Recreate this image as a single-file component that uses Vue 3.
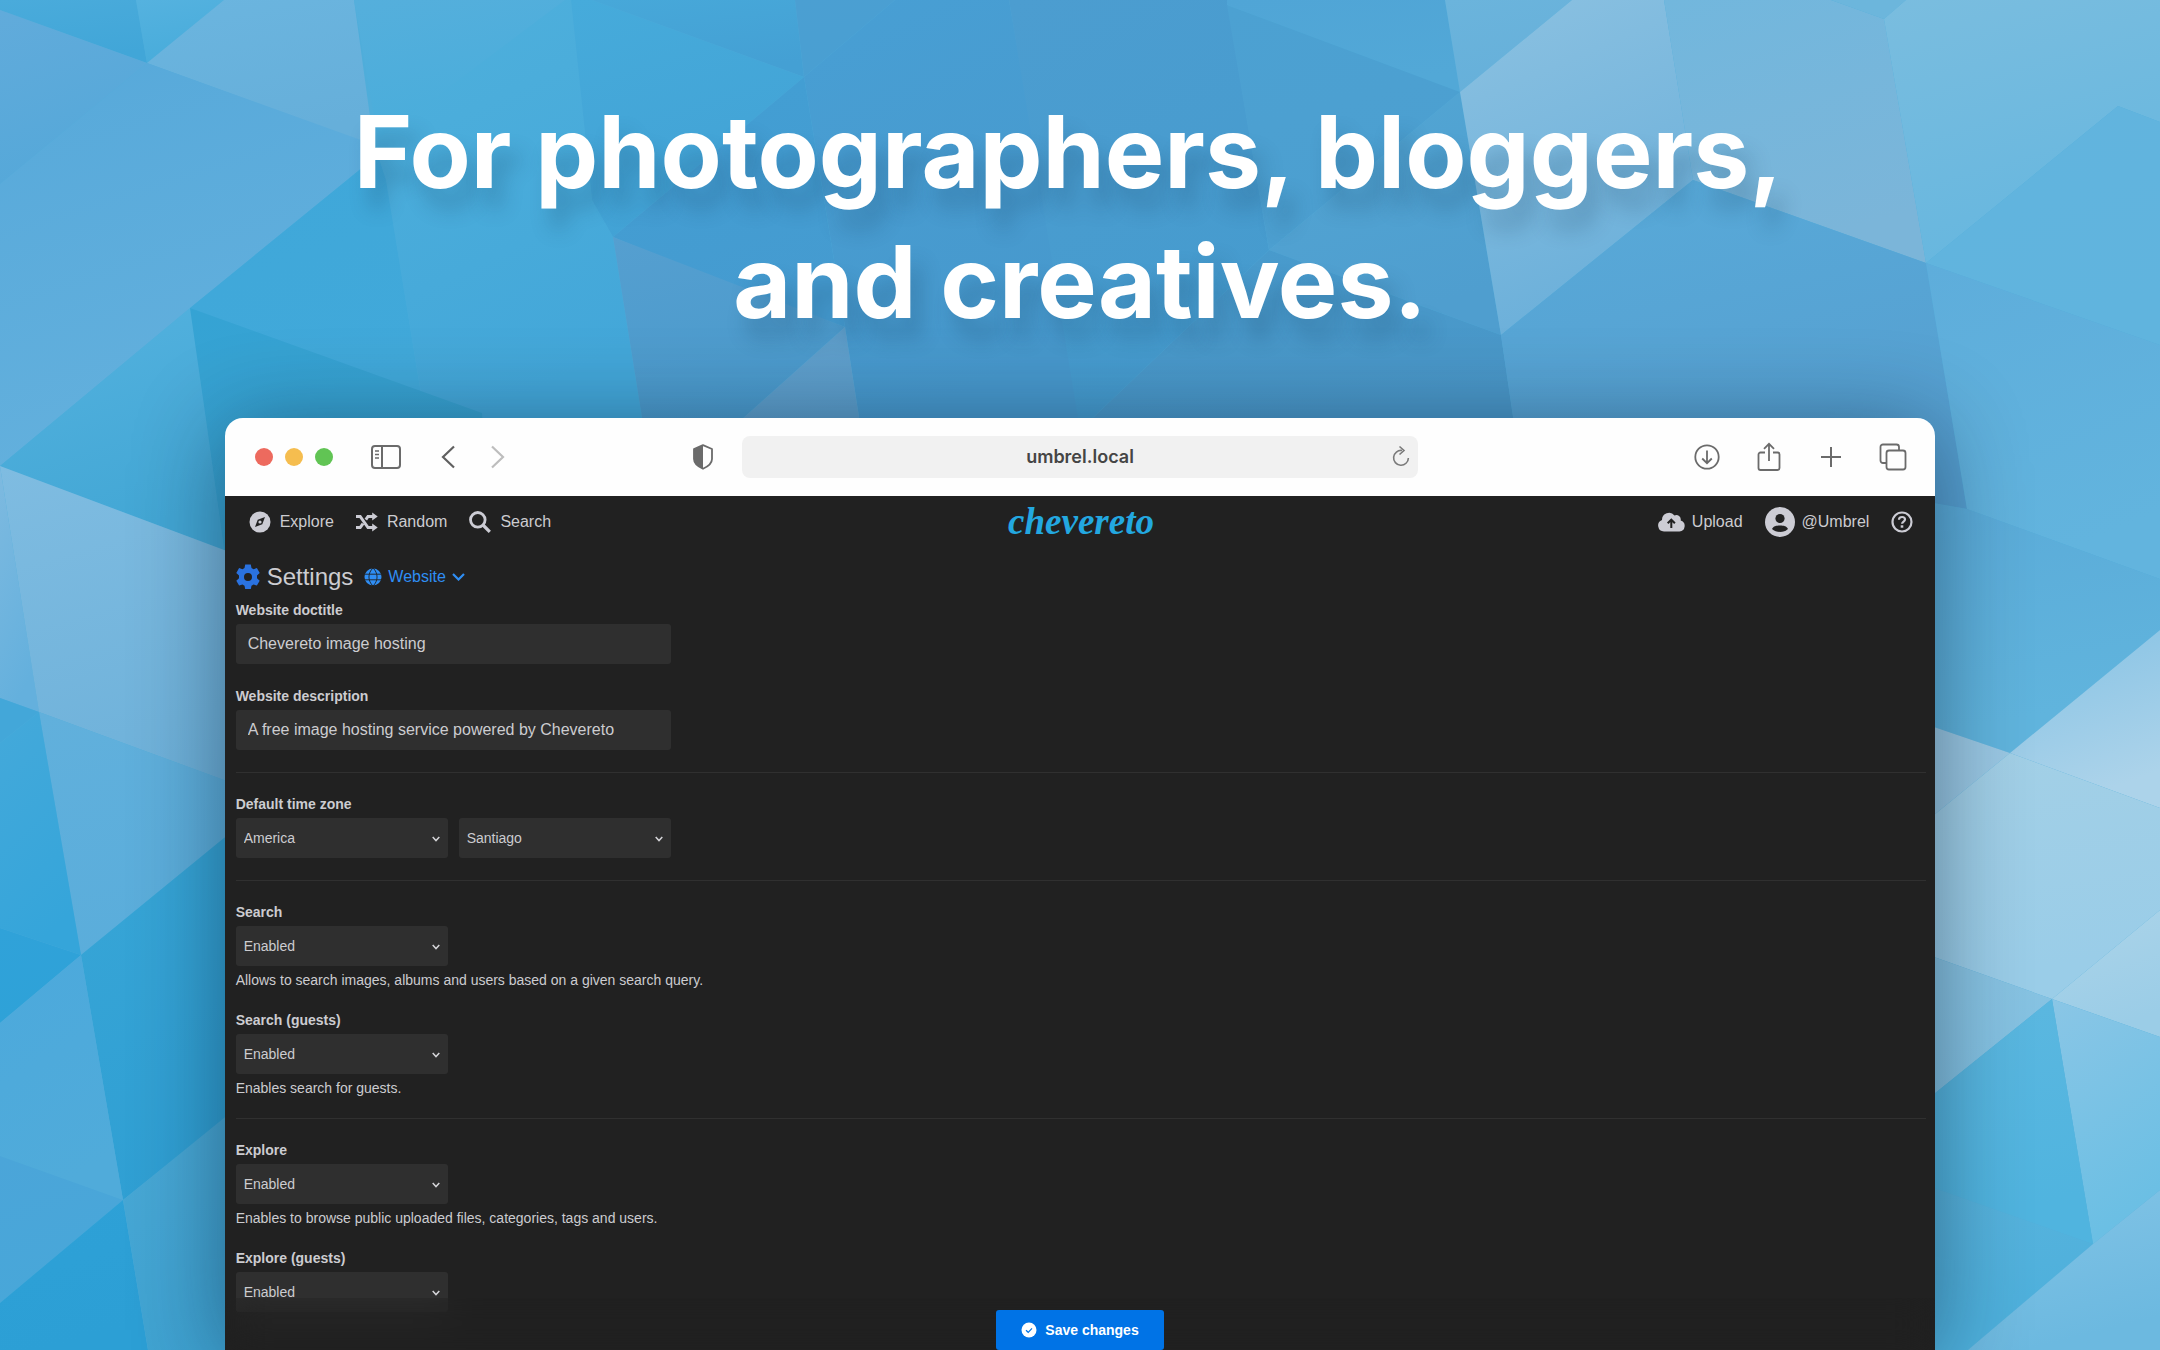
<script setup>
import { ref } from 'vue'

const groups = ref([
  [
    { id: 'doctitle', label: 'Website doctitle', text: 'Chevereto image hosting' },
    { id: 'description', label: 'Website description', text: 'A free image hosting service powered by Chevereto' },
  ],
  [{ id: 'timezone', label: 'Default time zone', selects: ['America', 'Santiago'] }],
  [
    { id: 'search', label: 'Search', selects: ['Enabled'], help: 'Allows to search images, albums and users based on a given search query.' },
    { id: 'search-guests', label: 'Search (guests)', selects: ['Enabled'], help: 'Enables search for guests.' },
  ],
  [
    { id: 'explore', label: 'Explore', selects: ['Enabled'], help: 'Enables to browse public uploaded files, categories, tags and users.' },
    { id: 'explore-guests', label: 'Explore (guests)', selects: ['Enabled'] },
  ],
])

// Facets of the backdrop: outline, start colour, end colour
const facets = [
  ['0,0 136,0 147,63 0,10', '#4aabdb', '#41a6d8'],
  ['136,0 224,0 147,63', '#55b2df', '#48acdb'],
  ['224,0 354,0 374,146 147,63', '#6bb5df', '#66afda'],
  ['354,0 565,0 378,140', '#55afdc', '#49addb'],
  ['0,10 147,63 0,184', '#61abdb', '#55a8d9'],
  ['147,63 372,144 363,167 190,308 0,466 0,184', '#57a9da', '#63b0dd'],
  ['565,0 571,0 592,200 613,237 644,430 427,430 386,180 374,143', '#4fb0dc', '#43a7d9'],
  ['363,167 374,143 386,180 427,430 190,308', '#3fa7d9', '#41a9da'],
  ['571,0 592,0 804,77 613,237 592,200', '#46abdb', '#42a2d5'],
  ['592,0 795,0 804,77', '#47a8d9', '#44a0d4'],
  ['795,0 895,0 804,77', '#4b9fd2', '#499fd2'],
  ['895,0 1009,0 1085,430 861,430 845,327 804,77', '#489fd4', '#4798cc'],
  ['613,237 804,77 845,327 716,280', '#429fd4', '#459bd0'],
  ['613,237 845,327 730,430 644,430', '#559fd0', '#4a9acc'],
  ['845,327 861,430 730,430', '#62a1cd', '#5b9dca'],
  ['1009,0 1227,0 1269,250 1080,430', '#4c9dd0', '#459bce'],
  ['1227,0 1445,0 1460,92 1227,5', '#50a5d6', '#52a8d7'],
  ['1227,5 1460,92 1269,250', '#4ca1d2', '#4c9fd0'],
  ['1460,92 1501,335 1269,250', '#52a6d4', '#4f9ecf'],
  ['1269,250 1501,335 1515,430 1080,430', '#489bcd', '#4a97c8'],
  ['1445,0 1572,0 1460,92', '#6bb4dc', '#66b0da'],
  ['1572,0 1664,0 1693,180 1501,335 1460,92', '#8bc1e1', '#6cb0da'],
  ['1664,0 1831,0 1884,19 1926,263 1693,180', '#72b7dd', '#7bb5d9'],
  ['1831,0 1906,0 1884,19', '#6cb6dc', '#6cb6dc'],
  ['1906,0 2160,0 2160,122 2118,106 1926,263 1884,19', '#7abddf', '#67b7df'],
  ['2118,106 2160,122 2160,345 1926,263', '#62b4de', '#60b4de'],
  ['1693,180 1926,263 1967,509 1515,430 1501,335', '#58aad9', '#569fd0'],
  ['1926,263 2160,345 2160,579 1967,509', '#5eaddb', '#62b4de'],
  ['1700,462 1967,509 2160,579 2160,630 2010,753 1934,727 1700,650', '#59a8d7', '#60b4dd'],
  ['1700,650 1934,727 2010,753 1934,815 1700,900', '#9dc9e3', '#98c7e3'],
  ['2160,630 2160,808 2010,753', '#85c2e4', '#acd3ea'],
  ['2010,753 2160,808 2160,910 2052,999 1934,957 1700,900 1934,815', '#a4d0e6', '#9acde8'],
  ['1700,870 1934,957 2052,999 1934,1094 1700,1200', '#90c6e3', '#80c0e1'],
  ['2160,910 2160,1037 2052,999', '#acd4e9', '#9bcde7'],
  ['2052,999 2160,1037 2160,1190 2093,1244', '#8ac6e6', '#6bbfe4'],
  ['2052,999 2093,1244 1934,1188 1700,1100 1934,1094', '#5eb8e0', '#50b4df'],
  ['1700,1100 1934,1188 2093,1244 1968,1350 1700,1350', '#61b6dd', '#4eb0dc'],
  ['2160,1190 2160,1350 1968,1350 2093,1244', '#83c4e6', '#6cb9e0'],
  ['0,466 190,308 206,420 224,550', '#54b2df', '#43a7d5'],
  ['190,308 482,413 500,620 224,550 206,420', '#35a3d4', '#3aa2cf'],
  ['0,466 39,712 0,698', '#7ebae0', '#64b0dd'],
  ['0,466 224,550 400,610 400,840 224,780 39,712', '#7fbce1', '#6cb0d9'],
  ['39,712 224,780 400,840 224,838 81,955', '#61b0dc', '#5aaddb'],
  ['0,698 39,712 0,743', '#43a7d9', '#43a7d9'],
  ['39,712 81,955 0,928 0,743', '#44a9da', '#35a5da'],
  ['0,928 81,955 0,1023', '#30a2d9', '#2ea2d8'],
  ['81,955 224,838 400,690 400,980 123,1200', '#3ba8d8', '#2f9fd3'],
  ['0,1023 81,955 123,1200 0,1156', '#4ca9dc', '#50abda'],
  ['0,1156 123,1200 0,1303', '#4ba5d9', '#48a7d9'],
  ['0,1303 123,1200 148,1350 0,1350', '#2ea1d7', '#2c9fd5'],
  ['123,1200 224,1118 400,980 400,1350 148,1350', '#4fabd7', '#3fa3d2'],
]
</script>

<template>
  <main class="page">
    <svg class="backdrop" viewBox="0 0 2160 1350" preserveAspectRatio="none" aria-hidden="true">
      <defs>
        <linearGradient v-for="(f, i) in facets" :id="'facet' + i" :key="i" x1="0" y1="0" x2="0.3" y2="1">
          <stop offset="0" :stop-color="f[1]" />
          <stop offset="1" :stop-color="f[2]" />
        </linearGradient>
      </defs>
      <rect width="2160" height="1350" fill="#4fadda" />
      <polygon v-for="(f, i) in facets" :key="i" :points="f[0]" :fill="`url(#facet${i})`" />
    </svg>

    <h1 class="headline">For photographers, bloggers,&nbsp;<br />and creatives.</h1>

    <section class="window">
      <header class="toolbar">
        <div class="tools-left">
          <div class="lights"><i class="red"></i><i class="amber"></i><i class="green"></i></div>
          <button class="tool sidebar" aria-label="Sidebar">
            <svg width="30" height="24" viewBox="0 0 30 24" fill="none" stroke="#6b6b6b" stroke-width="2"><rect x="1" y="1" width="28" height="22" rx="3" /><path d="M11 1v22" /><path d="M4 6h4M4 9.500h4M4 13h4" stroke-width="1.300" /></svg>
          </button>
          <button class="tool back" aria-label="Back">
            <svg width="14" height="24" viewBox="0 0 14 24" fill="none" stroke="#606060" stroke-width="2.200"><path d="M13 1.500 2 12l11 10.500" /></svg>
          </button>
          <button class="tool forward" aria-label="Forward">
            <svg width="14" height="24" viewBox="0 0 14 24" fill="none" stroke="#bdbdbd" stroke-width="2.200"><path d="m1 1.500 11 10.500L1 22.500" /></svg>
          </button>
          <button class="tool shield" aria-label="Privacy report">
            <svg width="22" height="26" viewBox="0 0 22 26"><path d="M11 1.200 20 5v10c0 4.500-4 7.500-9 9.800C6 22.500 2 19.500 2 15V5z" fill="none" stroke="#6b6b6b" stroke-width="1.800" stroke-linejoin="round" /><path d="M11 1.200v23.600C6 22.500 2 19.500 2 15V5z" fill="#6b6b6b" /></svg>
          </button>
        </div>
        <div class="address">
          <input type="text" value="umbrel.local" aria-label="Address" />
          <button class="reload" aria-label="Reload">
            <svg width="18" height="22" viewBox="0 0 18 22" fill="none" stroke="#7a7a7a" stroke-width="1.600"><path d="M10 5.500A7.400 7.400 0 1 0 16.400 13" /><path d="m7.500 1.500 4.500 4-4.500 4" /></svg>
          </button>
        </div>
        <div class="tools-right">
          <button class="tool" aria-label="Downloads">
            <svg width="28" height="28" viewBox="0 0 28 28" fill="none" stroke="#6b6b6b" stroke-width="1.800"><circle cx="14" cy="14" r="11.700" /><path d="M14 7.500v12.500M9.200 15.500 14 20.200l4.800-4.700" /></svg>
          </button>
          <button class="tool" aria-label="Share">
            <svg width="28" height="30" viewBox="0 0 28 30" fill="none" stroke="#6b6b6b" stroke-width="1.800"><path d="M10 10.500H5.500a2 2 0 0 0-2 2V26a2 2 0 0 0 2 2h17a2 2 0 0 0 2-2V12.500a2 2 0 0 0-2-2H18M14 19V2M9 6.800 14 1.800l5 5" /></svg>
          </button>
          <button class="tool" aria-label="New tab">
            <svg width="28" height="28" viewBox="0 0 28 28" fill="none" stroke="#6b6b6b" stroke-width="2"><path d="M14 4v20M4 14h20" /></svg>
          </button>
          <button class="tool" aria-label="Tabs">
            <svg width="28" height="28" viewBox="0 0 28 28" fill="none" stroke="#6b6b6b" stroke-width="1.800"><path d="M7.500 20H4a2.500 2.500 0 0 1-2.500-2.500V4A2.500 2.500 0 0 1 4 1.500h13.500A2.500 2.500 0 0 1 20 4v3.500" /><rect x="7.500" y="7.500" width="19" height="19" rx="2.500" /></svg>
          </button>
        </div>
      </header>

      <div class="app">
        <nav class="topbar">
          <div class="nav-left">
            <a href="#explore"><svg width="22" height="22" viewBox="0 0 22 22"><circle cx="11" cy="11" r="10.500" fill="#ccccd4" /><path d="m16 6-2.700 7.300L6 16l2.700-7.300z" fill="#212121" /><circle cx="11" cy="11" r="1.600" fill="#ccccd4" /></svg>Explore</a>
            <a href="#random"><svg width="22" height="20" viewBox="0 0 22 20" fill="none" stroke="#ccccd4" stroke-width="3"><path d="M0 4.500h4.200L12 15.500h5M0 15.500h4.200L7 11.600M9.800 7.700 12 4.500h5" /><path d="M16.200 0.500v8l5.500-4zM16.200 11.500v8l5.500-4z" fill="#ccccd4" stroke="none" /></svg>Random</a>
            <a href="#search"><svg width="22" height="22" viewBox="0 0 22 22" fill="none" stroke="#ccccd4" stroke-width="2.800"><circle cx="8.800" cy="8.800" r="7.300" /><path d="m14 14 6.800 6.800" stroke-width="3.200" /></svg>Search</a>
          </div>
          <a class="logo" href="#home">chevereto</a>
          <div class="nav-right">
            <a class="upload" href="#upload"><svg width="27" height="20" viewBox="0 0 27 20"><path d="M6 19.500a6 6 0 0 1-2-11.600A7 7 0 0 1 16.500 3.400a4.500 4.500 0 0 1 6.200 5A5.700 5.700 0 0 1 21.500 19.500z" fill="#ccccd4" /><path d="M13.300 16V8M9.700 11.300l3.600-3.600 3.600 3.600" fill="none" stroke="#212121" stroke-width="2" /></svg>Upload</a>
            <a class="user" href="#user"><svg width="30" height="30" viewBox="0 0 30 30"><circle cx="15" cy="15" r="15" fill="#ccccd4" /><circle cx="15" cy="11.500" r="4.600" fill="#212121" /><path d="M7 22c1.500-3 4-3.500 8-3.500s6.500.5 8 3.500c-2 2-5 3-8 3s-6-1-8-3z" fill="#212121" /></svg>@Umbrel</a>
            <a href="#help" aria-label="Help"><svg width="22" height="22" viewBox="0 0 22 22" fill="none" stroke="#ccccd4"><circle cx="11" cy="11" r="9.500" stroke-width="2.200" /><path d="M8 8.700C8 6.900 9.300 6 11 6s3 1 3 2.500c0 2-2.900 2.200-2.900 4.300" stroke-width="2.200" /><path d="M11 14.300v2.400" stroke-width="2.600" /></svg></a>
          </div>
        </nav>

        <form class="settings" @submit.prevent>
          <div class="title">
            <svg width="24" height="26" viewBox="0 0 24 26"><path fill-rule="evenodd" fill="#2a72e0" d="M9.200 0.600h5.600l.7 3.500 2 1.100 3.400-1.100 2.800 4.800-2.700 2.500v2.900l2.700 2.500-2.800 4.800-3.400-1.100-2 1.200-.7 3.400H9.200l-.7-3.400-2-1.200-3.400 1.100L.3 16.800 3 14.300v-2.900L.3 8.900l2.800-4.800 3.400 1.100 2-1.100zM12 8.900a4 4 0 1 0 0 8 4 4 0 0 0 0-8z" /></svg>
            <h2>Settings</h2>
            <a href="#website">
              <svg width="18" height="18" viewBox="0 0 18 18"><circle cx="9" cy="9" r="8.500" fill="#2f8ef4" /><path d="M.5 6.200h17M.5 11.800h17M9 0C3.600 5 3.600 13 9 18M9 0c5.400 5 5.400 13 0 18" fill="none" stroke="#212121" stroke-width="0.900" /></svg>
              Website
              <svg class="caret" width="13" height="8" viewBox="0 0 13 8" fill="none" stroke="#2f8ef4" stroke-width="2.200"><path d="m1 1 5.500 5.500L12 1" /></svg>
            </a>
          </div>

          <section v-for="(group, g) in groups" :key="g" class="group">
            <div v-for="field in group" :key="field.id" class="field">
              <label :for="field.id">{{ field.label }}</label>
              <input v-if="field.text" :id="field.id" v-model="field.text" type="text" />
              <div v-else class="selects">
                <div v-for="(choice, s) in field.selects" :key="s" class="select">
                  <select :id="s ? field.id + s : field.id" :aria-label="field.label">
                    <option>{{ choice }}</option>
                  </select>
                  <svg width="8" height="6" viewBox="0 0 8 6" fill="none" stroke="#d4d4d8" stroke-width="1.500"><path d="m.7 1 3.300 3.600L7.300 1" /></svg>
                </div>
              </div>
              <p v-if="field.help">{{ field.help }}</p>
            </div>
          </section>
        </form>

        <footer class="savebar">
          <button type="submit">
            <svg width="16" height="16" viewBox="0 0 16 16"><circle cx="8" cy="8" r="7.500" fill="#fff" /><path d="m5 8.200 2.200 2.100L11 6.400" fill="none" stroke="#0073e6" stroke-width="1.200" /></svg>
            Save changes
          </button>
        </footer>
      </div>
    </section>
  </main>
</template>

<style>
body {
  margin: 0;
}
</style>

<style scoped>
* {
  box-sizing: border-box;
}
svg {
  display: block;
  flex: none;
}
.page {
  position: relative;
  display: flex;
  flex-direction: column;
  align-items: center;
  height: 100vh;
  overflow: hidden;
  font-family: "Liberation Sans", Arial, sans-serif;
}
.backdrop {
  position: absolute;
  inset: 0;
  width: 100%;
  height: 100%;
}
.headline {
  position: relative;
  margin: 0;
  padding: 87px 0 71px;
  font: 700 100px/130px Inter, sans-serif;
  color: #fff;
  text-align: center;
  white-space: nowrap;
  text-shadow: 10px 20px 20px rgba(20, 60, 90, 0.25);
}
.window {
  position: relative;
  display: flex;
  flex: 1;
  flex-direction: column;
  width: 79.2%;
  min-height: 0;
  border-radius: 18px 18px 0 0;
  box-shadow: 0 10px 90px rgba(0, 20, 40, 0.45);
}
button {
  padding: 0;
  border: 0;
  background: none;
  font: inherit;
}
a {
  color: inherit;
  text-decoration: none;
}
.toolbar {
  display: grid;
  grid-template-columns: 1fr 676px 1fr;
  align-items: center;
  height: 78px;
  padding: 0 28px;
  border-radius: 18px 18px 0 0;
  background: #fefefe;
}
.tools-left,
.tools-right {
  display: flex;
  align-items: center;
}
.tools-right {
  justify-content: flex-end;
  gap: 34px;
}
.lights {
  display: flex;
  gap: 12px;
  padding-left: 2px;
}
.lights i {
  width: 18px;
  height: 18px;
  border-radius: 50%;
}
.red {
  background: #ed6a5e;
}
.amber {
  background: #f5bd4f;
}
.green {
  background: #61c454;
}
.sidebar {
  margin-left: 38px;
}
.back {
  margin-left: 40px;
}
.forward {
  margin-left: 36px;
}
.shield {
  margin: 0 28px 0 auto;
}
.address {
  position: relative;
}
.address input {
  display: block;
  width: 100%;
  height: 42px;
  padding: 0 40px;
  border: 0;
  border-radius: 8px;
  background: #f1f1f1;
  color: #454545;
  font: 600 18px/42px Inter, sans-serif;
  text-align: center;
}
.reload {
  position: absolute;
  top: 9px;
  right: 8px;
}
.app {
  position: relative;
  flex: 1;
  min-height: 0;
  overflow: hidden;
  background: #212121;
  color: #ccccd0;
}
.topbar {
  display: grid;
  grid-template-columns: 1fr auto 1fr;
  align-items: center;
  height: 52px;
  padding: 0 22px 0 24px;
  font-size: 16px;
}
.nav-left,
.nav-right,
.topbar a {
  display: flex;
  align-items: center;
}
.nav-left {
  gap: 22px;
}
.nav-left a {
  gap: 9px;
}
.nav-right {
  justify-content: flex-end;
  gap: 22px;
}
.nav-right a {
  gap: 7px;
}
.topbar .logo {
  color: #23a8e0;
  font: italic 700 37px/40px "Liberation Serif", serif;
}
.settings {
  padding: 6px 9px 0 11px;
}
.title {
  display: flex;
  align-items: center;
  height: 46px;
}
.title h2 {
  margin: 0 11px 0 7px;
  font-size: 24px;
  font-weight: 400;
}
.title a {
  display: flex;
  align-items: center;
  gap: 6px;
  color: #2f8ef4;
  font-size: 16px;
}
.group {
  display: flex;
  flex-direction: column;
  gap: 22px;
}
.group + .group {
  margin-top: 22px;
  padding-top: 21px;
  border-top: 1px solid #303030;
}
.field label {
  display: block;
  margin-bottom: 4px;
  font-size: 14px;
  font-weight: 700;
  line-height: 20px;
}
.field input,
.field select {
  display: block;
  height: 40px;
  border: 0;
  border-radius: 3px;
  background: #2f2f2f;
  color: #ccccd0;
}
.field input {
  width: 435px;
  padding: 0 12px;
  font: 16px "Liberation Sans", Arial, sans-serif;
}
.selects {
  display: flex;
  gap: 11px;
}
.select {
  position: relative;
}
.select svg {
  position: absolute;
  top: 18px;
  right: 8px;
  pointer-events: none;
}
.field select {
  width: 212px;
  padding: 0 8px;
  appearance: none;
  font: 14px "Liberation Sans", Arial, sans-serif;
}
.field p {
  margin: 6px 0 0;
  font-size: 14px;
  line-height: 16px;
}
.savebar {
  position: absolute;
  right: 0;
  bottom: 0;
  left: 0;
  display: flex;
  justify-content: center;
  padding-top: 12px;
  background: rgba(32, 32, 32, 0.1);
  backdrop-filter: blur(20px);
}
.savebar button {
  display: flex;
  align-items: center;
  justify-content: center;
  gap: 8px;
  width: 168px;
  height: 40px;
  border-radius: 3px;
  background: #0073e6;
  color: #fff;
  font-size: 14px;
  font-weight: 700;
}
</style>
